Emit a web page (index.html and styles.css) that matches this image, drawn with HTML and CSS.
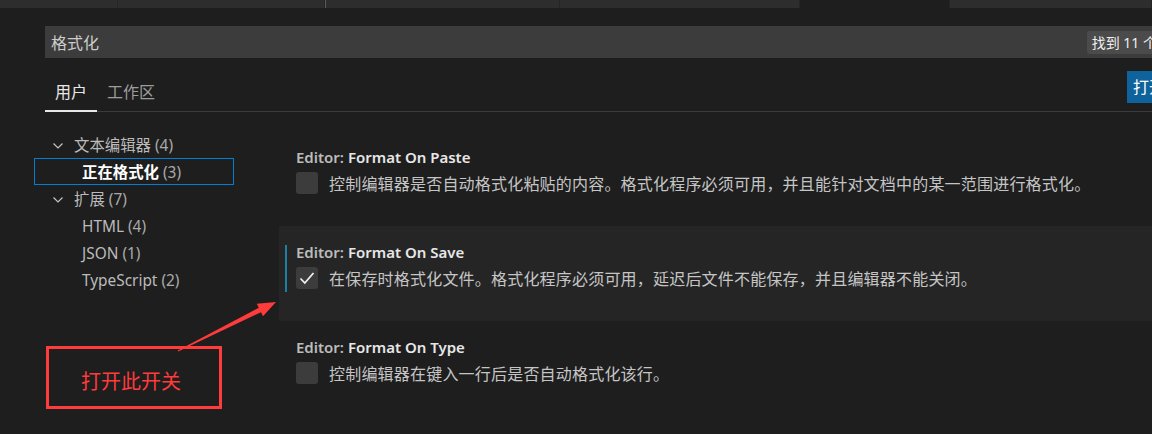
FILE: index.html
```html
<!DOCTYPE html>
<html lang="zh-CN">
<head>
    <meta charset="UTF-8">
    <title>设置</title>
    <link rel="stylesheet" href="styles.css">
</head>
<body>
    <div class="tab-strip">
        <div class="strip-tab w1"></div>
        <div class="strip-tab w2"></div>
        <div class="strip-tab w3 lit"></div>
        <div class="strip-tab w4"></div>
        <div class="strip-tab w5 active"></div>
        <div class="strip-tab w6"></div>
    </div>

    <div class="header">
        <div class="search">
            <span class="search-text">格式化</span>
            <span class="count">找到 11 个设置</span>
        </div>
        <div class="scope-row">
            <div class="scope current">用户</div>
            <div class="scope">工作区</div>
            <div class="open-json">打开设置(json)</div>
        </div>
    </div>

    <div class="body">
        <div class="tree">
            <div class="node parent">
                <svg class="chevron" width="12" height="12" viewBox="0 0 12 12"><path d="M1.5 3.5 L6 8 L10.5 3.5" fill="none" stroke="#c5c5c5" stroke-width="1.2"/></svg>
                文本编辑器 <span class="num">(4)</span>
            </div>
            <div class="node child selected"><b>正在格式化</b> <span class="num">(3)</span></div>
            <div class="node parent">
                <svg class="chevron" width="12" height="12" viewBox="0 0 12 12"><path d="M1.5 3.5 L6 8 L10.5 3.5" fill="none" stroke="#c5c5c5" stroke-width="1.2"/></svg>
                扩展 <span class="num">(7)</span>
            </div>
            <div class="node child">HTML <span class="num">(4)</span></div>
            <div class="node child">JSON <span class="num">(1)</span></div>
            <div class="node child">TypeScript <span class="num">(2)</span></div>
        </div>

        <div class="settings">
            <div class="item">
                <div class="title"><span class="cat">Editor: </span>Format On Paste</div>
                <div class="row">
                    <span class="check"></span>
                    <span class="desc">控制编辑器是否自动格式化粘贴的内容。格式化程序必须可用，并且能针对文档中的某一范围进行格式化。</span>
                </div>
            </div>
            <div class="item focused">
                <div class="title"><span class="cat">Editor: </span>Format On Save</div>
                <div class="row">
                    <span class="check">
                        <svg width="22" height="22" viewBox="0 0 22 22"><path d="M4.5 11.5 L8.8 16 L17.5 6" fill="none" stroke="#f0f0f0" stroke-width="1.8"/></svg>
                    </span>
                    <span class="desc">在保存时格式化文件。格式化程序必须可用，延迟后文件不能保存，并且编辑器不能关闭。</span>
                </div>
            </div>
            <div class="item">
                <div class="title"><span class="cat">Editor: </span>Format On Type</div>
                <div class="row">
                    <span class="check"></span>
                    <span class="desc">控制编辑器在键入一行后是否自动格式化该行。</span>
                </div>
            </div>
        </div>
    </div>

    <!-- 标注 -->
    <div class="note">打开此开关</div>
    <svg class="arrow" width="1152" height="434" viewBox="0 0 1152 434">
        <polygon points="177.8,350.6 258.8,307.8 256.8,303.7 276,302 263,316.3 261,312.2 178.2,351.4" fill="#ff3b3b"/>
    </svg>
</body>
</html>
```

FILE: styles.css
```css
*{
    box-sizing: border-box;
}
body{
    margin: 0;
    width: 1152px;
    height: 434px;
    overflow: hidden;
    position: relative;
    background: #1e1e1e;
    color: #cccccc;
    font-family: "Noto Sans", "Noto Sans CJK SC", sans-serif;
    font-size: 16px;
}
.tab-strip{
    display: flex;
    height: 8px;
}
.strip-tab{
    background: #2d2d2d;
    border-right: 1px solid #252526;
    flex: none;
}
.strip-tab.lit{
    border-left: 1px solid #5a5a5a;
}
.strip-tab.active{
    background: #1e1e1e;
}
.w1{ width: 118px; }
.w2{ width: 207px; }
.w3{ width: 235px; }
.w4{ width: 240px; }
.w5{ width: 150px; }
.w6{ width: 202px; }

.header{
    padding-left: 45px;
}
.search{
    margin-top: 18px;
    width: 1160px;
    height: 32px;
    background: #3c3c3c;
    display: flex;
    align-items: center;
    padding: 0 6px;
}
.search-text{
    flex: 1;
    color: #cccccc;
    font-size: 16px;
}
.count{
    margin-right: 9px;
    height: 23px;
    line-height: 23px;
    padding: 0 5px;
    background: #4b4b4b;
    border-radius: 3px;
    color: #f0f0f0;
    font-size: 14px;
    white-space: nowrap;
}
.scope-row{
    display: flex;
    padding-top: 14px;
    border-bottom: 1px solid #3b3b3b;
}
.scope{
    height: 40px;
    line-height: 40px;
    padding: 0 10px;
    margin-bottom: -1px;
    color: #9d9d9d;
    border-bottom: 2px solid transparent;
}
.scope.current{
    color: #e7e7e7;
    border-bottom-color: #e7e7e7;
}
.open-json{
    margin-left: auto;
    margin-top: -1px;
    margin-right: -60px;
    width: 85px;
    height: 32px;
    line-height: 32px;
    padding-left: 6px;
    background: #0e639c;
    color: #ffffff;
    white-space: nowrap;
    overflow: hidden;
}

.body{
    display: flex;
}
.tree{
    width: 200px;
    margin-left: 34px;
    margin-top: 19px;
    flex: none;
}
.node{
    height: 27px;
    line-height: 28px;
    color: #bbbbbb;
    font-size: 15.4px;
    border: 1px solid transparent;
    white-space: nowrap;
}
.node.parent{
    padding-left: 17px;
}
.node.child{
    padding-left: 47px;
}
.chevron{
    vertical-align: -1px;
    margin-right: 6px;
}
.node.selected{
    border-color: #007fd4;
}
.node.selected b{
    color: #ffffff;
    font-weight: 700;
}
.num{
    color: #aaaaaa;
}

.settings{
    margin-left: 45px;
    margin-top: 19px;
    flex: 1;
}
.item{
    height: 95px;
    padding: 17px 0 0 17px;
    position: relative;
}
.item.focused{
    background: #252526;
}
.item.focused::before{
    content: "";
    position: absolute;
    left: 6px;
    top: 19px;
    width: 2px;
    height: 47px;
    background: #1b7fa6;
}
.title{
    height: 18px;
    line-height: 18px;
    font-size: 15px;
    font-weight: 600;
    color: #e7e7e7;
    white-space: nowrap;
}
.cat{
    color: #bbbbbb;
}
.row{
    margin-top: 5px;
    display: flex;
    align-items: center;
    white-space: nowrap;
}
.check{
    width: 22px;
    height: 22px;
    background: #3c3c3c;
    border-radius: 3px;
    flex: none;
    display: flex;
}
.desc{
    margin-left: 11px;
    color: #c5c5c5;
    font-size: 16px;
    letter-spacing: 0.2px;
}

.note{
    position: absolute;
    left: 46px;
    top: 346px;
    width: 176px;
    height: 63px;
    border: 3px solid #ff3b3b;
    color: #ff3b3b;
    font-size: 20px;
    padding: 20px 0 0 32px;
    line-height: 26px;
}
.arrow{
    position: absolute;
    left: 0;
    top: 0;
}
```
